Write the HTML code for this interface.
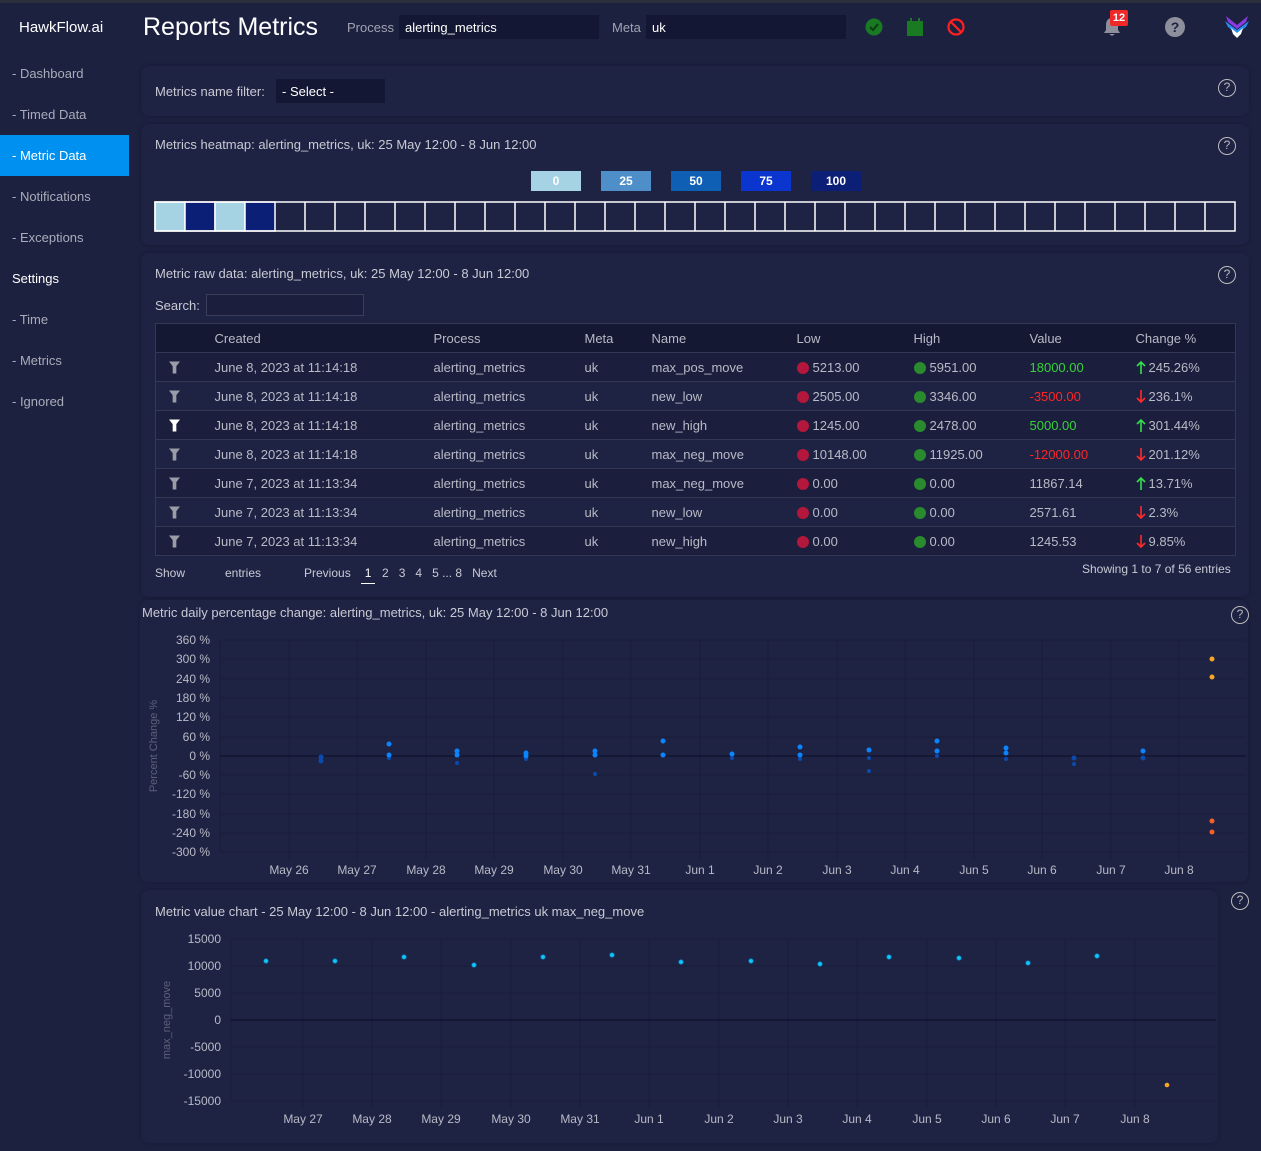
<!DOCTYPE html>
<html><head><meta charset="utf-8"><style>
*{box-sizing:border-box;margin:0;padding:0}
body{width:1261px;height:1151px;background:#1d2140;font-family:"Liberation Sans",sans-serif;color:#c8cad4;font-size:13px;position:relative;overflow:hidden}
.a{position:absolute;white-space:nowrap}
.top{position:absolute;left:0;top:0;width:1261px;height:3px;background:#2b2e3b}
.nav{position:absolute;left:12px;font-size:13px;color:#a9acb8}
.panel{position:absolute;background:#1f2343;border-radius:8px;box-shadow:0 0 3px #151830}
.inp{position:absolute;background:#131733;height:24px;color:#fff;font-size:13px;padding:5px 6px}
.help{position:absolute;width:18px;height:18px;border:1.5px solid #bbb;border-radius:50%;color:#bbb;font-size:12px;text-align:center;line-height:15px}
.leg{position:absolute;top:171px;width:50px;height:20px;color:#fff;font-weight:bold;font-size:12px;text-align:center;line-height:20px}
table{border-collapse:collapse;position:absolute;left:155px;top:323px;width:1081px;font-size:13px}
td,th{height:29px;font-weight:normal;text-align:left;color:#b8bac6;border-top:1px solid #343852;padding:0;vertical-align:middle}
th{background:#141833;color:#b8bac6}
tr.b td{background:#1b1f3d}
.dot{display:inline-block;width:12px;height:12px;border-radius:50%;vertical-align:-2px;margin-right:4px}
.r{background:#b3173b}.g{background:#2a8a2e}
.gv{color:#38d13a}.rv{color:#ff2525}
.f{padding-left:13px}
.f svg{display:block}
.ar{vertical-align:-2px;margin-right:3px}
</style></head><body>
<div class="top"></div>
<div class="a" style="left:19px;top:19px;font-size:15px;color:#fff">HawkFlow.ai</div>
<div class="a" style="left:143px;top:13px;font-size:25px;color:#fff">Reports Metrics</div>
<div class="a" style="left:347px;top:20px;color:#a0a3b0">Process</div>
<div class="inp" style="left:399px;top:15px;width:200px">alerting_metrics</div>
<div class="a" style="left:612px;top:20px;color:#a0a3b0">Meta</div>
<div class="inp" style="left:646px;top:15px;width:200px">uk</div>
<svg class="a" style="left:864px;top:17px" width="20" height="20"><circle cx="10" cy="10" r="8.5" fill="#1a7a24"/><path d="M6 10l3 3 5-6" stroke="#0c3d12" stroke-width="2" fill="none"/></svg>
<svg class="a" style="left:906px;top:17px" width="18" height="20"><rect x="1" y="4" width="16" height="15" fill="#1a7a24"/><rect x="4" y="1" width="2" height="5" fill="#1a7a24"/><rect x="12" y="1" width="2" height="5" fill="#1a7a24"/></svg>
<svg class="a" style="left:946px;top:17px" width="20" height="20"><circle cx="10" cy="10" r="7.5" stroke="#ff2020" stroke-width="2.2" fill="none"/><path d="M5 5l10 10" stroke="#ff2020" stroke-width="2.2"/></svg>
<svg class="a" style="left:1101px;top:14px" width="22" height="24"><path d="M11 4c-4 0-6 3-6 7v5l-2 3h16l-2-3v-5c0-4-2-7-6-7z M8 20h6l-3 2z" fill="#8d909c"/></svg>
<div class="a" style="left:1110px;top:10px;width:18px;height:16px;background:#f02828;border-radius:2px;color:#fff;font-size:11px;text-align:center;line-height:16px;font-weight:bold">12</div>
<div class="a" style="left:1165px;top:17px;width:20px;height:20px;border-radius:50%;background:#8d909c;color:#1d2140;font-weight:bold;font-size:14px;text-align:center;line-height:20px">?</div>
<svg class="a" style="left:1224px;top:14px" width="26" height="26"><path d="M2 2l11 9 11-9-2 6-9 7-9-7z" fill="#8a3be0"/><path d="M1 7l12 9 12-9-3 6-9 7-9-7z" fill="#2b8cf0"/><path d="M7 14l6 5 6-5-2 6-4 4-4-4z" fill="#fff"/></svg>

<div class="nav" style="top:66px">- Dashboard</div>
<div class="nav" style="top:107px">- Timed Data</div>
<div class="a" style="left:0;top:135px;width:129px;height:41px;background:#0090ef"></div>
<div class="nav" style="top:148px;color:#fff">- Metric Data</div>
<div class="nav" style="top:189px">- Notifications</div>
<div class="nav" style="top:230px">- Exceptions</div>
<div class="nav" style="top:271px;color:#fff">Settings</div>
<div class="nav" style="top:312px">- Time</div>
<div class="nav" style="top:353px">- Metrics</div>
<div class="nav" style="top:394px">- Ignored</div>

<div class="panel" style="left:141px;top:66px;width:1108px;height:50px"></div>
<div class="a" style="left:155px;top:84px">Metrics name filter:</div>
<div class="inp" style="left:276px;top:79px;width:109px">- Select -</div>
<div class="help" style="left:1218px;top:79px">?</div>

<div class="panel" style="left:141px;top:124px;width:1108px;height:121px"></div>
<div class="a" style="left:155px;top:137px">Metrics heatmap: alerting_metrics, uk: 25 May 12:00 - 8 Jun 12:00</div>
<div class="help" style="left:1218px;top:137px">?</div>
<div class="leg" style="left:531px;background:#a6d3e3">0</div>
<div class="leg" style="left:601px;background:#4e8fc9">25</div>
<div class="leg" style="left:671px;background:#0f5fb5">50</div>
<div class="leg" style="left:741px;background:#0a35cf">75</div>
<div class="leg" style="left:811px;background:#0b1f77">100</div>
<svg class="a" style="left:154px;top:201px" width="1083" height="32">
<g stroke="#fff" stroke-width="1.5">
<rect x="1" y="1" width="30" height="29" fill="#a6d3e3"/><rect x="31" y="1" width="30" height="29" fill="#0b1f77"/><rect x="61" y="1" width="30" height="29" fill="#a6d3e3"/><rect x="91" y="1" width="30" height="29" fill="#0b1f77"/>
<rect x="1" y="1" width="1080" height="29" fill="none"/>
<path d="M151 1v29M181 1v29M211 1v29M241 1v29M271 1v29M301 1v29M331 1v29M361 1v29M391 1v29M421 1v29M451 1v29M481 1v29M511 1v29M541 1v29M571 1v29M601 1v29M631 1v29M661 1v29M691 1v29M721 1v29M751 1v29M781 1v29M811 1v29M841 1v29M871 1v29M901 1v29M931 1v29M961 1v29M991 1v29M1021 1v29M1051 1v29"/>
</g></svg>

<div class="panel" style="left:141px;top:253px;width:1108px;height:344px"></div>
<div class="a" style="left:155px;top:266px">Metric raw data: alerting_metrics, uk: 25 May 12:00 - 8 Jun 12:00</div>
<div class="help" style="left:1218px;top:266px">?</div>
<div class="a" style="left:155px;top:298px">Search:</div>
<div class="a" style="left:206px;top:294px;width:158px;height:22px;border:1px solid #3a3e58;background:#1b1f3d"></div>
<svg width="0" height="0" style="position:absolute"><defs>
<symbol id="fn" viewBox="0 0 12 13"><path d="M0 0h12l-4 5v8h-4v-8z"/></symbol>
<symbol id="up" viewBox="0 0 10 13"><path d="M5 1v12M1 5l4-4 4 4" stroke="#33e04a" stroke-width="1.6" fill="none"/></symbol>
<symbol id="dn" viewBox="0 0 10 13"><path d="M5 0v12M1 8l4 4 4-4" stroke="#ff2a2a" stroke-width="1.6" fill="none"/></symbol>
</defs></svg>
<table style="border:1px solid #343852">
<colgroup><col style="width:59px"><col style="width:219px"><col style="width:151px"><col style="width:67px"><col style="width:145px"><col style="width:117px"><col style="width:116px"><col style="width:106px"><col></colgroup>
<tr><th></th><th>Created</th><th>Process</th><th>Meta</th><th>Name</th><th>Low</th><th>High</th><th>Value</th><th>Change %</th></tr>
<tr class="b"><td class="f"><svg width="11" height="13" fill="#9a9ca8"><use href="#fn"/></svg></td><td>June 8, 2023 at 11:14:18</td><td>alerting_metrics</td><td>uk</td><td>max_pos_move</td><td><span class="dot r"></span>5213.00</td><td><span class="dot g"></span>5951.00</td><td class="gv">18000.00</td><td><svg class="ar" width="10" height="13"><use href="#up"/></svg>245.26%</td></tr>
<tr><td class="f"><svg width="11" height="13" fill="#9a9ca8"><use href="#fn"/></svg></td><td>June 8, 2023 at 11:14:18</td><td>alerting_metrics</td><td>uk</td><td>new_low</td><td><span class="dot r"></span>2505.00</td><td><span class="dot g"></span>3346.00</td><td class="rv">-3500.00</td><td><svg class="ar" width="10" height="13"><use href="#dn"/></svg>236.1%</td></tr>
<tr class="b"><td class="f"><svg width="11" height="13" fill="#fff"><use href="#fn"/></svg></td><td>June 8, 2023 at 11:14:18</td><td>alerting_metrics</td><td>uk</td><td>new_high</td><td><span class="dot r"></span>1245.00</td><td><span class="dot g"></span>2478.00</td><td class="gv">5000.00</td><td><svg class="ar" width="10" height="13"><use href="#up"/></svg>301.44%</td></tr>
<tr><td class="f"><svg width="11" height="13" fill="#9a9ca8"><use href="#fn"/></svg></td><td>June 8, 2023 at 11:14:18</td><td>alerting_metrics</td><td>uk</td><td>max_neg_move</td><td><span class="dot r"></span>10148.00</td><td><span class="dot g"></span>11925.00</td><td class="rv">-12000.00</td><td><svg class="ar" width="10" height="13"><use href="#dn"/></svg>201.12%</td></tr>
<tr class="b"><td class="f"><svg width="11" height="13" fill="#9a9ca8"><use href="#fn"/></svg></td><td>June 7, 2023 at 11:13:34</td><td>alerting_metrics</td><td>uk</td><td>max_neg_move</td><td><span class="dot r"></span>0.00</td><td><span class="dot g"></span>0.00</td><td>11867.14</td><td><svg class="ar" width="10" height="13"><use href="#up"/></svg>13.71%</td></tr>
<tr><td class="f"><svg width="11" height="13" fill="#9a9ca8"><use href="#fn"/></svg></td><td>June 7, 2023 at 11:13:34</td><td>alerting_metrics</td><td>uk</td><td>new_low</td><td><span class="dot r"></span>0.00</td><td><span class="dot g"></span>0.00</td><td>2571.61</td><td><svg class="ar" width="10" height="13"><use href="#dn"/></svg>2.3%</td></tr>
<tr class="b"><td class="f"><svg width="11" height="13" fill="#9a9ca8"><use href="#fn"/></svg></td><td>June 7, 2023 at 11:13:34</td><td>alerting_metrics</td><td>uk</td><td>new_high</td><td><span class="dot r"></span>0.00</td><td><span class="dot g"></span>0.00</td><td>1245.53</td><td><svg class="ar" width="10" height="13"><use href="#dn"/></svg>9.85%</td></tr>
</table>
<div class="a" style="left:155px;top:566px;font-size:12px">Show</div>
<div class="a" style="left:225px;top:566px;font-size:12px">entries</div>
<div class="a" style="left:304px;top:566px;font-size:12px">Previous &nbsp; <span style="color:#fff;border-bottom:1px solid #fff;padding:0 4px 3px">1</span> &nbsp;2 &nbsp; 3 &nbsp; 4 &nbsp; 5 ... 8 &nbsp; Next</div>
<div class="a" style="left:1082px;top:562px;font-size:12px">Showing 1 to 7 of 56 entries</div>

<div class="panel" style="left:140px;top:600px;width:1108px;height:282px"></div>
<div class="a" style="left:142px;top:605px">Metric daily percentage change: alerting_metrics, uk: 25 May 12:00 - 8 Jun 12:00</div>
<div class="help" style="left:1231px;top:606px">?</div>
<div class="panel" style="left:141px;top:890px;width:1077px;height:253px"></div>
<div class="a" style="left:155px;top:904px">Metric value chart - 25 May 12:00 - 8 Jun 12:00 - alerting_metrics uk max_neg_move</div>
<div class="help" style="left:1231px;top:892px">?</div>

<svg class="a" style="left:0;top:0" width="1261" height="1151" font-family="Liberation Sans, sans-serif" font-size="12" fill="#b8bac6">
<g stroke="#1a1d3a" stroke-width="1">
<path d="M220 640H1246M220 659H1246M220 679H1246M220 698H1246M220 717H1246M220 737H1246M220 775H1246M220 794H1246M220 814H1246M220 833H1246M220 852H1246"/>
<path d="M220 640V852M289 640V860M357 640V860M426 640V860M494 640V860M563 640V860M631 640V860M700 640V860M768 640V860M837 640V860M905 640V860M974 640V860M1042 640V860M1111 640V860M1179 640V860"/>
<path d="M220 756H1246" stroke="#121530" stroke-width="1.5"/>
</g>
<g text-anchor="end"><text x="210" y="644">360 %</text><text x="210" y="663">300 %</text><text x="210" y="683">240 %</text><text x="210" y="702">180 %</text><text x="210" y="721">120 %</text><text x="210" y="741">60 %</text><text x="210" y="760">0 %</text><text x="210" y="779">-60 %</text><text x="210" y="798">-120 %</text><text x="210" y="818">-180 %</text><text x="210" y="837">-240 %</text><text x="210" y="856">-300 %</text></g>
<g text-anchor="middle"><text x="289" y="874">May 26</text><text x="357" y="874">May 27</text><text x="426" y="874">May 28</text><text x="494" y="874">May 29</text><text x="563" y="874">May 30</text><text x="631" y="874">May 31</text><text x="700" y="874">Jun 1</text><text x="768" y="874">Jun 2</text><text x="837" y="874">Jun 3</text><text x="905" y="874">Jun 4</text><text x="974" y="874">Jun 5</text><text x="1042" y="874">Jun 6</text><text x="1111" y="874">Jun 7</text><text x="1179" y="874">Jun 8</text></g>
<text transform="translate(157 746) rotate(-90)" text-anchor="middle" fill="#5c6078" font-size="11">Percent Change %</text>
<g fill="#0a4bb0"><circle cx="321" cy="757" r="2.5"/><circle cx="321" cy="761" r="2.5"/><circle cx="389" cy="758" r="2"/><circle cx="457" cy="763" r="2"/><circle cx="526" cy="759" r="2"/><circle cx="595" cy="774" r="2"/><circle cx="732" cy="758" r="2"/><circle cx="800" cy="759" r="2"/><circle cx="869" cy="771" r="2"/><circle cx="869" cy="758" r="2"/><circle cx="937" cy="756" r="2"/><circle cx="1006" cy="759" r="2"/><circle cx="1074" cy="758" r="2.5"/><circle cx="1074" cy="764" r="2"/><circle cx="1143" cy="758" r="2.5"/></g>
<g fill="#0a84ff"><circle cx="389" cy="744" r="2.5"/><circle cx="389" cy="755" r="2.5"/><circle cx="457" cy="751" r="2.5"/><circle cx="457" cy="755" r="2.5"/><circle cx="526" cy="753" r="2.5"/><circle cx="526" cy="756" r="2.5"/><circle cx="595" cy="751" r="2.5"/><circle cx="595" cy="755" r="2.5"/><circle cx="663" cy="741" r="2.5"/><circle cx="663" cy="755" r="2.5"/><circle cx="732" cy="754" r="2.5"/><circle cx="800" cy="747" r="2.5"/><circle cx="800" cy="755" r="2.5"/><circle cx="869" cy="750" r="2.5"/><circle cx="937" cy="741" r="2.5"/><circle cx="937" cy="751" r="2.5"/><circle cx="1006" cy="748" r="2.5"/><circle cx="1006" cy="753" r="2.5"/><circle cx="1143" cy="751" r="2.5"/></g>
<g fill="#f5a623"><circle cx="1212" cy="659" r="2.5"/><circle cx="1212" cy="677" r="2.5"/></g>
<g fill="#f5602a"><circle cx="1212" cy="821" r="2.5"/><circle cx="1212" cy="832" r="2.5"/></g>

<g stroke="#1a1d3a" stroke-width="1">
<path d="M231 939H1216M231 966H1216M231 993H1216M231 1047H1216M231 1074H1216M231 1101H1216"/>
<path d="M231 939V1101M303 939V1109M372 939V1109M441 939V1109M511 939V1109M580 939V1109M649 939V1109M719 939V1109M788 939V1109M857 939V1109M927 939V1109M996 939V1109M1065 939V1109M1135 939V1109"/>
<path d="M231 1020H1216" stroke="#121530" stroke-width="1.5"/>
</g>
<g text-anchor="end"><text x="221" y="943">15000</text><text x="221" y="970">10000</text><text x="221" y="997">5000</text><text x="221" y="1024">0</text><text x="221" y="1051">-5000</text><text x="221" y="1078">-10000</text><text x="221" y="1105">-15000</text></g>
<g text-anchor="middle"><text x="303" y="1123">May 27</text><text x="372" y="1123">May 28</text><text x="441" y="1123">May 29</text><text x="511" y="1123">May 30</text><text x="580" y="1123">May 31</text><text x="649" y="1123">Jun 1</text><text x="719" y="1123">Jun 2</text><text x="788" y="1123">Jun 3</text><text x="857" y="1123">Jun 4</text><text x="927" y="1123">Jun 5</text><text x="996" y="1123">Jun 6</text><text x="1065" y="1123">Jun 7</text><text x="1135" y="1123">Jun 8</text></g>
<text transform="translate(170 1020) rotate(-90)" text-anchor="middle" fill="#5c6078" font-size="11">max_neg_move</text>
<g fill="#12c6f5" stroke="#0a6fb0" stroke-width="0.8"><circle cx="266" cy="961" r="2.3"/><circle cx="335" cy="961" r="2.3"/><circle cx="404" cy="957" r="2.3"/><circle cx="474" cy="965" r="2.3"/><circle cx="543" cy="957" r="2.3"/><circle cx="612" cy="955" r="2.3"/><circle cx="681" cy="962" r="2.3"/><circle cx="751" cy="961" r="2.3"/><circle cx="820" cy="964" r="2.3"/><circle cx="889" cy="957" r="2.3"/><circle cx="959" cy="958" r="2.3"/><circle cx="1028" cy="963" r="2.3"/><circle cx="1097" cy="956" r="2.3"/></g>
<circle cx="1167" cy="1085" r="2.3" fill="#f5a623"/>
</svg>
</body></html>
